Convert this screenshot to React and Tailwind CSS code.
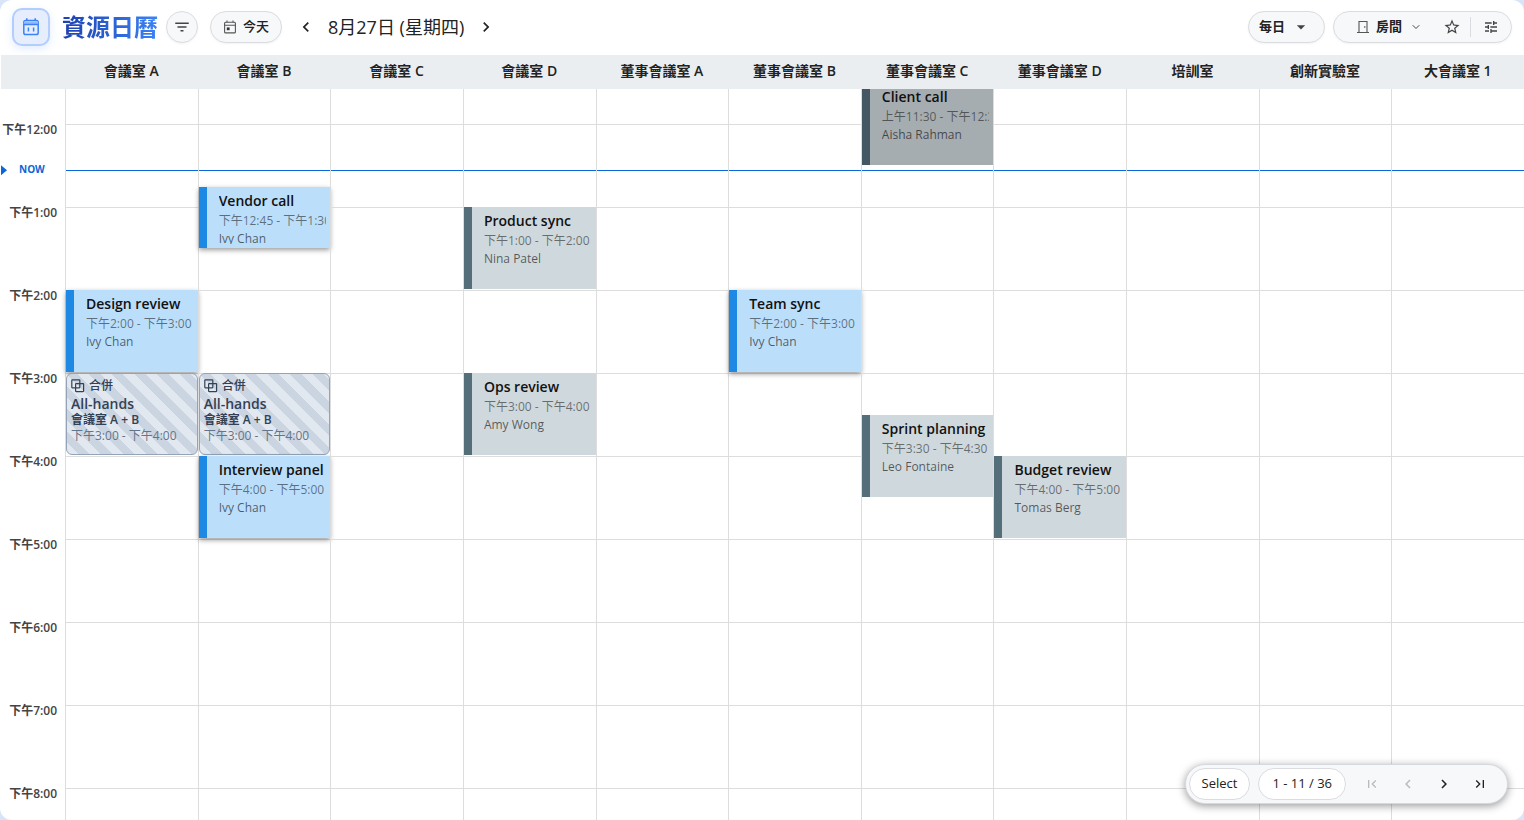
import {
  MdArrowDropDown,
  MdChevronLeft,
  MdChevronRight,
  MdFilterList,
  MdFirstPage,
  MdLastPage,
  MdStarBorder,
  MdTune,
} from 'react-icons/md'
import { ChevronDown } from 'lucide-react'

const HOUR_PX = 83
const FIRST_HOUR = 11
const HOURS = [11, 12, 13, 14, 15, 16, 17, 18, 19, 20]
const NOW = 12.56

const ROOMS = [
  '會議室 A',
  '會議室 B',
  '會議室 C',
  '會議室 D',
  '董事會議室 A',
  '董事會議室 B',
  '董事會議室 C',
  '董事會議室 D',
  '培訓室',
  '創新實驗室',
  '大會議室 1',
]

const EVENTS = [
  { room: '會議室 A', title: 'Design review', who: 'Ivy Chan', start: 14, end: 15, kind: 'mine' },
  { room: '會議室 A', title: 'All-hands', rooms: '會議室 A + B', start: 15, end: 16, kind: 'merged' },
  { room: '會議室 B', title: 'Vendor call', who: 'Ivy Chan', start: 12.75, end: 13.5, kind: 'mine' },
  { room: '會議室 B', title: 'All-hands', rooms: '會議室 A + B', start: 15, end: 16, kind: 'merged' },
  { room: '會議室 B', title: 'Interview panel', who: 'Ivy Chan', start: 16, end: 17, kind: 'mine' },
  { room: '會議室 D', title: 'Product sync', who: 'Nina Patel', start: 13, end: 14, kind: 'other' },
  { room: '會議室 D', title: 'Ops review', who: 'Amy Wong', start: 15, end: 16, kind: 'other' },
  { room: '董事會議室 B', title: 'Team sync', who: 'Ivy Chan', start: 14, end: 15, kind: 'mine' },
  { room: '董事會議室 C', title: 'Client call', who: 'Aisha Rahman', start: 11.5, end: 12.5, kind: 'past' },
  { room: '董事會議室 C', title: 'Sprint planning', who: 'Leo Fontaine', start: 15.5, end: 16.5, kind: 'other' },
  { room: '董事會議室 D', title: 'Budget review', who: 'Tomas Berg', start: 16, end: 17, kind: 'other' },
]

const KIND_STYLE = {
  mine: 'bg-[#bbdefb] border-[#1e88e5] shadow-[0_2px_5px_rgba(0,0,0,0.4)]',
  other: 'bg-[#cfd8dc] border-[#546e7a]',
  past: 'bg-[#a6adb0] border-[#435862]',
}

function formatTime(t) {
  const hour = Math.floor(t)
  const minutes = String(Math.round((t - hour) * 60)).padStart(2, '0')
  return `${hour < 12 ? '上午' : '下午'}${hour > 12 ? hour - 12 : hour}:${minutes}`
}

function position(start, end) {
  return {
    top: Math.ceil((start - FIRST_HOUR) * HOUR_PX),
    height: Math.round((end - start) * HOUR_PX) - 1,
  }
}

function CalendarLogo() {
  return (
    <svg viewBox="0 0 20 20" className="size-5" fill="none" stroke="#3b82f6" strokeWidth="1.5">
      <rect x="2.8" y="3.5" width="14.4" height="14" rx="1.8" />
      <path d="M2.8 4.5h14.4v3H2.8z" fill="#93bbfb" stroke="none" />
      <path d="M2.8 7.6h14.4M5.8 1.2v2.3M14.2 1.2v2.3M7.4 10.4v4.2M12.6 10.4v4.2" />
    </svg>
  )
}

function TodayIcon() {
  return (
    <svg viewBox="0 0 14 14" className="size-3.5" fill="none" stroke="#555" strokeWidth="1.1">
      <rect x="1.6" y="2.3" width="10.8" height="10.6" rx="1" />
      <path d="M1.6 5.3h10.8M4 .4v1.9M10 .4v1.9" />
      <rect x="3.8" y="7.4" width="2.8" height="2.8" fill="#333" stroke="none" />
    </svg>
  )
}

function DoorIcon() {
  return (
    <svg viewBox="0 0 14 14" className="size-3.5" fill="none" stroke="#555" strokeWidth="1.1">
      <path d="M3 12.5v-11h8v11M1 12.5h12" />
      <circle cx="8.8" cy="7" r=".8" fill="#444" stroke="none" />
    </svg>
  )
}

function MergeIcon() {
  return (
    <svg viewBox="0 0 14 14" className="size-3.5" fill="none" stroke="#334155" strokeWidth="1.2">
      <rect x=".8" y=".8" width="8" height="8" rx=".5" />
      <rect x="4.6" y="4.6" width="8" height="8" rx=".5" />
    </svg>
  )
}

function EventCard({ event }) {
  const time = `${formatTime(event.start)} - ${formatTime(event.end)}`

  if (event.kind === 'merged') {
    return (
      <article
        style={position(event.start, event.end)}
        className="absolute inset-x-0 overflow-hidden rounded-md border border-[#94a3b8] bg-[repeating-linear-gradient(45deg,#e2e8f0_0_8px,#cbd5e1_8px_16px)] px-1 pt-1 text-xs whitespace-nowrap text-[#334155]"
      >
        <div className="flex h-4 items-center gap-1 font-medium">
          <MergeIcon />
          合併
        </div>
        <h3 className="mt-0.5 text-sm leading-4 font-semibold">{event.title}</h3>
        <p className="leading-4 font-semibold">{event.rooms}</p>
        <p className="leading-4 text-[#64748b]">{time}</p>
      </article>
    )
  }

  return (
    <article
      style={position(event.start, event.end)}
      className={`absolute inset-x-0 overflow-hidden border-l-8 pt-1 pr-1 pb-1 pl-3 whitespace-nowrap ${KIND_STYLE[event.kind]}`}
    >
      <div className="h-full overflow-hidden text-xs leading-[18px] text-black/60">
        <h3 className="mb-px text-sm leading-5 font-semibold text-[#111]">{event.title}</h3>
        <p className="text-black/50">{time}</p>
        <p>{event.who}</p>
      </div>
    </article>
  )
}

function Toolbar() {
  return (
    <header className="flex h-[55px] shrink-0 items-center px-3 pb-0.5 text-[#222]">
      <div className="flex size-[38px] items-center justify-center rounded-[10px] border-2 border-[#b3cdfc] bg-[#e6eefe] shadow-[0_3px_8px_rgba(59,130,246,0.15)]">
        <CalendarLogo />
      </div>
      <h1 className="ml-3 bg-linear-to-r from-[#1e40af] to-[#3b82f6] bg-clip-text text-2xl font-bold text-transparent">
        資源日曆
      </h1>
      <button
        aria-label="篩選"
        className="ml-2 flex size-8 items-center justify-center rounded-full border border-[#dadce0] bg-[#f7f8fa] shadow-xs"
      >
        <MdFilterList className="size-[18px] text-[#444]" />
      </button>
      <button className="ml-3 flex h-8 items-center gap-1.5 rounded-full border border-[#dadce0] bg-[#f7f8fa] px-3 text-[13px] font-medium shadow-xs">
        <TodayIcon />
        今天
      </button>
      <button aria-label="前一天" className="ml-3.5 flex size-5 items-center justify-center">
        <MdChevronLeft className="size-5" />
      </button>
      <h2 className="mx-3 text-lg">8月27日 (星期四)</h2>
      <button aria-label="後一天" className="flex size-5 items-center justify-center">
        <MdChevronRight className="size-5" />
      </button>

      <div className="ml-auto flex h-8 items-center gap-2">
        <div className="relative h-8 w-[77px]">
          <select
            aria-label="檢視"
            className="size-full appearance-none rounded-full border border-[#dadce0] bg-[#f7f8fa] pl-2.5 text-[13px] font-bold shadow-xs"
          >
            <option>每日</option>
          </select>
          <MdArrowDropDown className="pointer-events-none absolute top-1.5 right-3.5 size-5 text-[#444]" />
        </div>
        <div className="flex h-8 items-center rounded-full border border-[#dadce0] bg-[#f7f8fa] pr-2.5 pl-[22px] shadow-xs">
          <DoorIcon />
          <div className="relative ml-1.5 flex h-full items-center">
            <select
              aria-label="資源類型"
              className="h-full w-[58px] appearance-none bg-transparent text-[13px] font-bold"
            >
              <option>房間</option>
            </select>
            <ChevronDown className="pointer-events-none absolute right-3 size-3 text-[#444]" />
          </div>
          <button aria-label="收藏" className="ml-2 flex size-5 items-center justify-center text-[#444]">
            <MdStarBorder className="size-[18px]" />
          </button>
          <span className="mr-2.5 ml-2 h-5 w-px bg-[#dadce0]" />
          <button aria-label="設定" className="flex size-5 items-center justify-center text-[#444]">
            <MdTune className="size-4" />
          </button>
        </div>
      </div>
    </header>
  )
}

function Pager() {
  return (
    <nav
      aria-label="分頁"
      className="absolute right-4 bottom-4 flex h-10 items-center rounded-full border border-[#d5d8dc] bg-[#f7f8fa] px-[3px] text-[13px] text-[#222] shadow-[0_2px_8px_rgba(0,0,0,0.4)]"
    >
      <button className="h-8 rounded-full border border-[#dadce0] bg-white px-3">Select</button>
      <span className="ml-2 flex h-8 items-center rounded-full border border-[#dadce0] bg-white px-[13px]">
        1 - 11 / 36
      </span>
      <div className="ml-4 flex gap-4 pr-3.5">
        <button aria-label="第一頁" disabled className="flex size-5 items-center justify-center text-[#bbb]">
          <MdFirstPage className="size-4" />
        </button>
        <button aria-label="上一頁" disabled className="flex size-5 items-center justify-center text-[#bbb]">
          <MdChevronLeft className="size-[18px]" />
        </button>
        <button aria-label="下一頁" className="flex size-5 items-center justify-center">
          <MdChevronRight className="size-[18px]" />
        </button>
        <button aria-label="最後一頁" className="flex size-5 items-center justify-center">
          <MdLastPage className="size-4" />
        </button>
      </div>
    </nav>
  )
}

export default function App() {
  const nowTop = Math.round((NOW - FIRST_HOUR) * HOUR_PX)

  return (
    <div className="h-screen bg-[#d8e4f8] font-['Open_Sans','Noto_Sans_CJK_TC',sans-serif]">
      <main className="relative flex h-full flex-col overflow-hidden rounded-xl bg-white">
        <Toolbar />

        <div className="z-10 ml-px flex h-[34px] shrink-0 items-center bg-[#ebeef1] pb-0.5 pl-16 text-sm font-semibold text-[#222]">
          {ROOMS.map(room => (
            <div key={room} className="min-w-0 flex-1 text-center">{room}</div>
          ))}
        </div>

        <div className="min-h-0 flex-1 overflow-hidden">
          {/* Scrolled so that the day opens just before noon */}
          <div className="-mt-12 flex">
            <div className="relative w-[65px] shrink-0 text-right text-xs font-semibold text-[#444]">
              {HOURS.map(hour => (
                <div key={hour} className="h-[83px] pr-2 leading-3">{formatTime(hour)}</div>
              ))}
              <div style={{ top: nowTop }} className="absolute left-px flex -translate-y-1/2 items-center text-[10px] font-bold text-[#0b66d8]">
                <span className="border-y-[5px] border-l-[6px] border-y-transparent border-l-[#0b66d8]" />
                <span className="ml-3">NOW</span>
              </div>
            </div>
            {ROOMS.map(room => (
              <div key={room} className="relative min-w-0 flex-1 border-l border-[#ddd]">
                {HOURS.map(hour => (
                  <div key={hour} className="h-[83px] border-t border-[#ddd]" />
                ))}
                <div style={{ top: nowTop }} className="absolute inset-x-0 h-px bg-[#0b66d8]" />
                {EVENTS.filter(e => e.room === room).map(e => (
                  <EventCard key={e.start} event={e} />
                ))}
              </div>
            ))}
          </div>
        </div>

        <Pager />
      </main>
    </div>
  )
}
